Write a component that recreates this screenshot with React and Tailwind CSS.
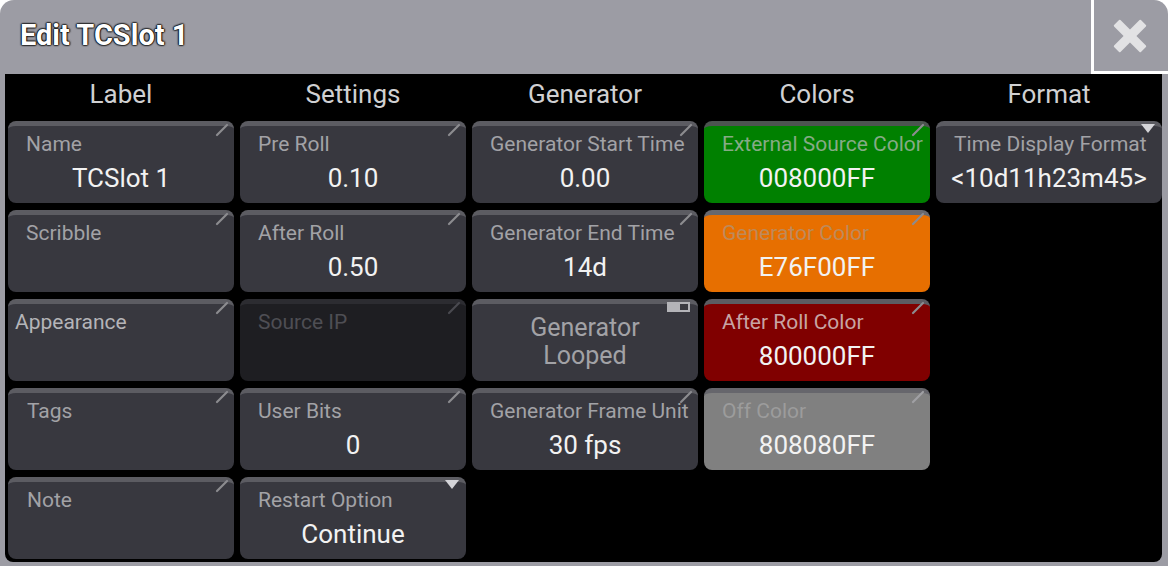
import React from "react";

function Pencil({ color = "#8c8c90" }) {
  return (
    <svg width="14" height="14" viewBox="0 0 14 14" className="absolute -top-[3px] right-[5px]">
      <path d="M2 12 L12 2" stroke={color} strokeWidth="2.2" strokeLinecap="round" />
    </svg>
  );
}

function Triangle() {
  return (
    <svg width="14" height="9" viewBox="0 0 14 9" className="absolute -top-[2px] right-[7px]">
      <path d="M0 0 H14 L7 9 Z" fill="#d4d4d8" />
    </svg>
  );
}

function Toggle() {
  return (
    <div className="absolute -top-[2px] right-[8px] w-[23px] h-[10px] bg-[#b4b4b8] flex items-center justify-end pr-[2px]">
      <div className="w-[8px] h-[6px] bg-[#3a3a40]" />
    </div>
  );
}

function Card({
  label,
  value,
  bg = "bg-[#38383f]",
  stripe = "border-[#5c5c62]",
  labelCls = "text-[#a2a2a6]",
  pad = "pl-[18px]",
  icon = "pencil",
  iconColor,
}) {
  return (
    <div className={`relative h-[82px] rounded-lg border-t-[5px] ${stripe} ${bg} flex flex-col`}>
      {icon === "pencil" && <Pencil color={iconColor} />}
      {icon === "triangle" && <Triangle />}
      <div className={`${pad} pt-[6px] text-[21px] leading-[24px] whitespace-nowrap ${labelCls}`}>{label}</div>
      {value && (
        <div className="mt-[7px] text-center text-[26px] leading-[30px] text-[#f2f2f2] whitespace-nowrap">{value}</div>
      )}
    </div>
  );
}

export default function App() {
  const headers = ["Label", "Settings", "Generator", "Colors", "Format"];
  return (
    <div className="w-[1168px] h-[566px] bg-[#9c9ca4] rounded-t-[14px] flex flex-col overflow-hidden" style={{ fontFamily: "Roboto, 'Liberation Sans', sans-serif" }}>
      <div className="h-[74px] flex items-center justify-between">
        <div className="pl-[20px] pb-[3px] text-[29px] font-bold text-white [text-shadow:0_0_2px_#000,0_0_2px_#000,0_0_2px_#000,0_0_1px_#000,0_0_1px_#000]">
          Edit TCSlot 1
        </div>
        <div className="w-[77px] h-full border-l-[3px] border-b-[3px] border-white flex items-center justify-center pr-[2px]">
          <svg width="34" height="34" viewBox="0 0 34 34">
            <g fill="#e2e2e4" transform="rotate(45 17 17)">
              <rect x="12.5" y="-2" width="9" height="38" rx="1" />
              <rect x="-2" y="12.5" width="38" height="9" rx="1" />
            </g>
          </svg>
        </div>
      </div>

      <div className="flex-1 ml-[5px] mr-[6px] mb-[4px] bg-black rounded-b-lg pl-[3px]">
        <div className="grid grid-cols-[repeat(5,226px)] gap-x-[6px]">
          {headers.map((h) => (
            <div key={h} className="h-[47px] pb-[6px] flex items-center justify-center text-[26px] text-[#d0d0d2]">
              {h}
            </div>
          ))}
        </div>

        <div className="grid grid-cols-[repeat(5,226px)] grid-rows-[repeat(5,82px)] grid-flow-col gap-x-[6px] gap-y-[7px]">
          {/* Label */}
          <Card label="Name" value="TCSlot 1" />
          <Card label="Scribble" />
          <Card label="Appearance" pad="pl-[7px]" labelCls="text-[#b4b4b8]" />
          <Card label="Tags" pad="pl-[19px]" />
          <Card label="Note" pad="pl-[19px]" />

          {/* Settings */}
          <Card label="Pre Roll" value="0.10" />
          <Card label="After Roll" value="0.50" />
          <Card label="Source IP" bg="bg-[#1e1e22]" stripe="border-[#2c2c31]" labelCls="text-[#4e4e54]" iconColor="#4a4a50" />
          <Card label="User Bits" value="0" />
          <Card label="Restart Option" value="Continue" icon="triangle" />

          {/* Generator */}
          <Card label="Generator Start Time" value="0.00" />
          <Card label="Generator End Time" value="14d" />
          <div className="relative h-[82px] rounded-lg border-t-[5px] border-[#5c5c62] bg-[#38383f] flex flex-col items-center justify-center text-[25px] leading-[28px] text-[#a2a2a6] pb-[2px]">
            <Toggle />
            <div>Generator</div>
            <div>Looped</div>
          </div>
          <Card label="Generator Frame Unit" value="30 fps" />
          <div />

          {/* Colors */}
          <Card label="External Source Color" value="008000FF" bg="bg-[#008000]" stripe="border-[#4c5450]" labelCls="text-[#86ab86]" />
          <Card label="Generator Color" value="E76F00FF" bg="bg-[#e76f00]" stripe="border-[#68686e]" labelCls="text-[#be8a5a]" />
          <Card label="After Roll Color" value="800000FF" bg="bg-[#800000]" stripe="border-[#5c5c62]" labelCls="text-[#c8a4a4]" />
          <Card label="Off Color" value="808080FF" bg="bg-[#808080]" stripe="border-[#66666c]" labelCls="text-[#9c9c9c]" iconColor="#a0a0a4" />
          <div />

          {/* Format */}
          <Card label="Time Display Format" value="<10d11h23m45>" icon="triangle" />
        </div>
      </div>
    </div>
  );
}
